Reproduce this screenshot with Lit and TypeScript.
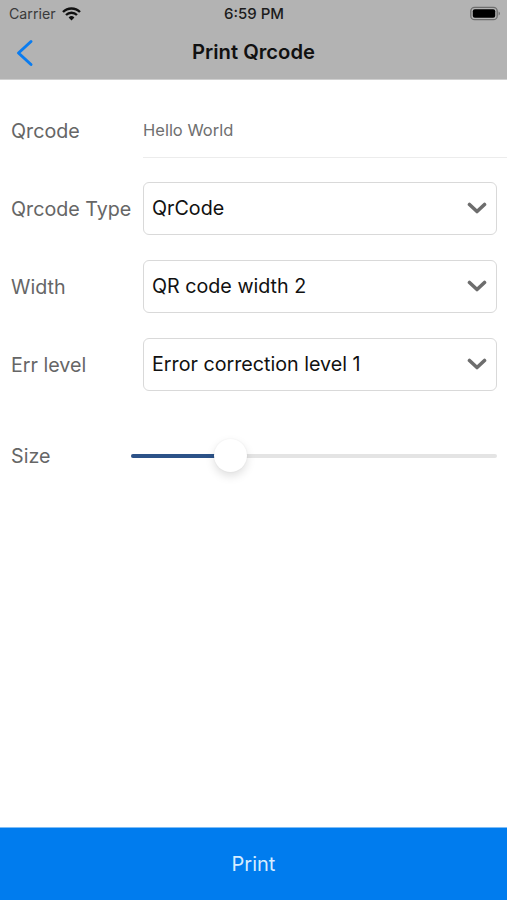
import { LitElement, html, css } from 'lit'
import { customElement } from 'lit/decorators.js'

const chevron = html`<svg class="chevron" width="20" height="12" viewBox="0 0 20 12">
  <path d="M2.5 2.5 L10 9.5 L17.5 2.5" fill="none" stroke="#6d6d6d" stroke-width="3.6" stroke-linecap="round" stroke-linejoin="round"></path>
</svg>`

@customElement('app-root')
export class AppRoot extends LitElement {
  static styles = css`
    :host {
      display: flex;
      flex-direction: column;
      height: 900px;
      background: #fff;
      font-family: Inter, "Liberation Sans", sans-serif;
      color: #666;
    }

    .top {
      height: 79px;
      background: #b3b3b3;
      flex: none;
      display: flex;
      flex-direction: column;
      border-bottom: 1px solid #cfcfcf;
    }

    .status {
      height: 27px;
      display: grid;
      grid-template-columns: 1fr auto 1fr;
      align-items: center;
      padding: 0 6px 0 9px;
      font-size: 14.2px;
      color: #222;
    }

    .carrier {
      display: flex;
      align-items: center;
      gap: 6px;
      color: #3a3a3a;
    }

    .time {
      font-size: 15px;
      font-weight: 500;
      color: #1c1c1c;
      margin-right: 2px;
    }

    .battery {
      justify-self: end;
      display: flex;
    }

    .nav {
      flex: 1;
      position: relative;
      display: flex;
      align-items: center;
      justify-content: center;
      padding-bottom: 3px;
      font-size: 20.2px;
      font-weight: 600;
      color: #111;
    }

    .back {
      position: absolute;
      left: 15px;
      top: 11px;
    }

    .form {
      flex: 1;
      display: flex;
      flex-direction: column;
      padding-top: 23px;
    }

    .row {
      display: grid;
      grid-template-columns: 132px 1fr;
      align-items: center;
      padding-left: 11px;
      font-size: 19.7px;
    }

    .input {
      height: 55px;
      box-sizing: border-box;
      border-bottom: 1px solid #ececec;
      display: flex;
      align-items: center;
      font-size: 16.5px;
      color: #707070;
    }

    .select-row {
      margin-top: 24px;
      padding-right: 10px;
    }

    .select-row + .select-row {
      margin-top: 25px;
    }

    .select {
      height: 53px;
      box-sizing: border-box;
      border: 1px solid #d9d9d9;
      border-radius: 6px;
      display: flex;
      align-items: center;
      justify-content: space-between;
      padding: 0 9px 1px 8px;
      font-size: 19.7px;
      color: #111;
    }

    .slider-row {
      margin-top: 38px;
      height: 54px;
      display: flex;
      align-items: center;
      padding: 0 10px 0 11px;
      font-size: 19.7px;
    }

    .slider-row label {
      width: 120px;
      flex: none;
    }

    .track {
      flex: 1;
      height: 4px;
      border-radius: 2px;
      background: #e4e4e4;
      position: relative;
    }

    .fill {
      height: 100%;
      border-radius: 2px;
      background: #2c5288;
    }

    .thumb {
      position: absolute;
      top: -15px;
      width: 33px;
      height: 33px;
      margin-left: -16.5px;
      border-radius: 50%;
      background: #fff;
      box-shadow: 0 4px 10px rgba(0, 0, 0, 0.13), 0 0 2px rgba(0, 0, 0, 0.06);
    }

    .print {
      flex: none;
      height: 73px;
      background: #007cee;
      border-top: 1px solid #7fbdf6;
      box-sizing: border-box;
      display: flex;
      align-items: center;
      justify-content: center;
      color: #d6ecff;
      font-size: 20px;
    }
  `

  renderSelect(label: string, value: string) {
    return html`
      <div class="row select-row">
        <label>${label}</label>
        <div class="select"><span>${value}</span>${chevron}</div>
      </div>
    `
  }

  render() {
    const size = 27.2
    return html`
      <div class="top">
        <div class="status">
          <div class="carrier">
            <span>Carrier</span>
            <svg width="19" height="14" viewBox="0 0 19 14">
              <path d="M1 5 A12 12 0 0 1 18 5" fill="none" stroke="#111" stroke-width="2.4"></path>
              <path d="M4 8 A8 8 0 0 1 15 8" fill="none" stroke="#111" stroke-width="2.4"></path>
              <path d="M6.6 10.4 A4.2 4.2 0 0 1 12.4 10.4 L9.5 13.5 Z" fill="#111"></path>
            </svg>
          </div>
          <span class="time">6:59 PM</span>
          <svg class="battery" width="31" height="15" viewBox="0 0 31 15">
            <rect x="0.8" y="1.3" width="26.4" height="12.4" rx="3.8" fill="none" stroke="#6e6e6e" stroke-width="1.3"></rect>
            <rect x="2.8" y="3.3" width="22.4" height="8.4" rx="2" fill="#000"></rect>
            <path d="M28.6 5.5 a2.2 2.2 0 0 1 0 4 z" fill="#6e6e6e"></path>
          </svg>
        </div>
        <div class="nav">
          <svg class="back" width="20" height="30" viewBox="0 0 20 30">
            <path d="M16 3.5 L3.5 15 L16 26.5" fill="none" stroke="#0a7cf0" stroke-width="3" stroke-linecap="round" stroke-linejoin="round"></path>
          </svg>
          Print Qrcode
        </div>
      </div>
      <div class="form">
        <div class="row">
          <label>Qrcode</label>
          <div class="input">Hello World</div>
        </div>
        ${this.renderSelect('Qrcode Type', 'QrCode')}
        ${this.renderSelect('Width', 'QR code width 2')}
        ${this.renderSelect('Err level', 'Error correction level 1')}
        <div class="slider-row">
          <label>Size</label>
          <div class="track">
            <div class="fill" style="width:${size}%"></div>
            <div class="thumb" style="left:${size}%"></div>
          </div>
        </div>
      </div>
      <div class="print">Print</div>
    `
  }
}
